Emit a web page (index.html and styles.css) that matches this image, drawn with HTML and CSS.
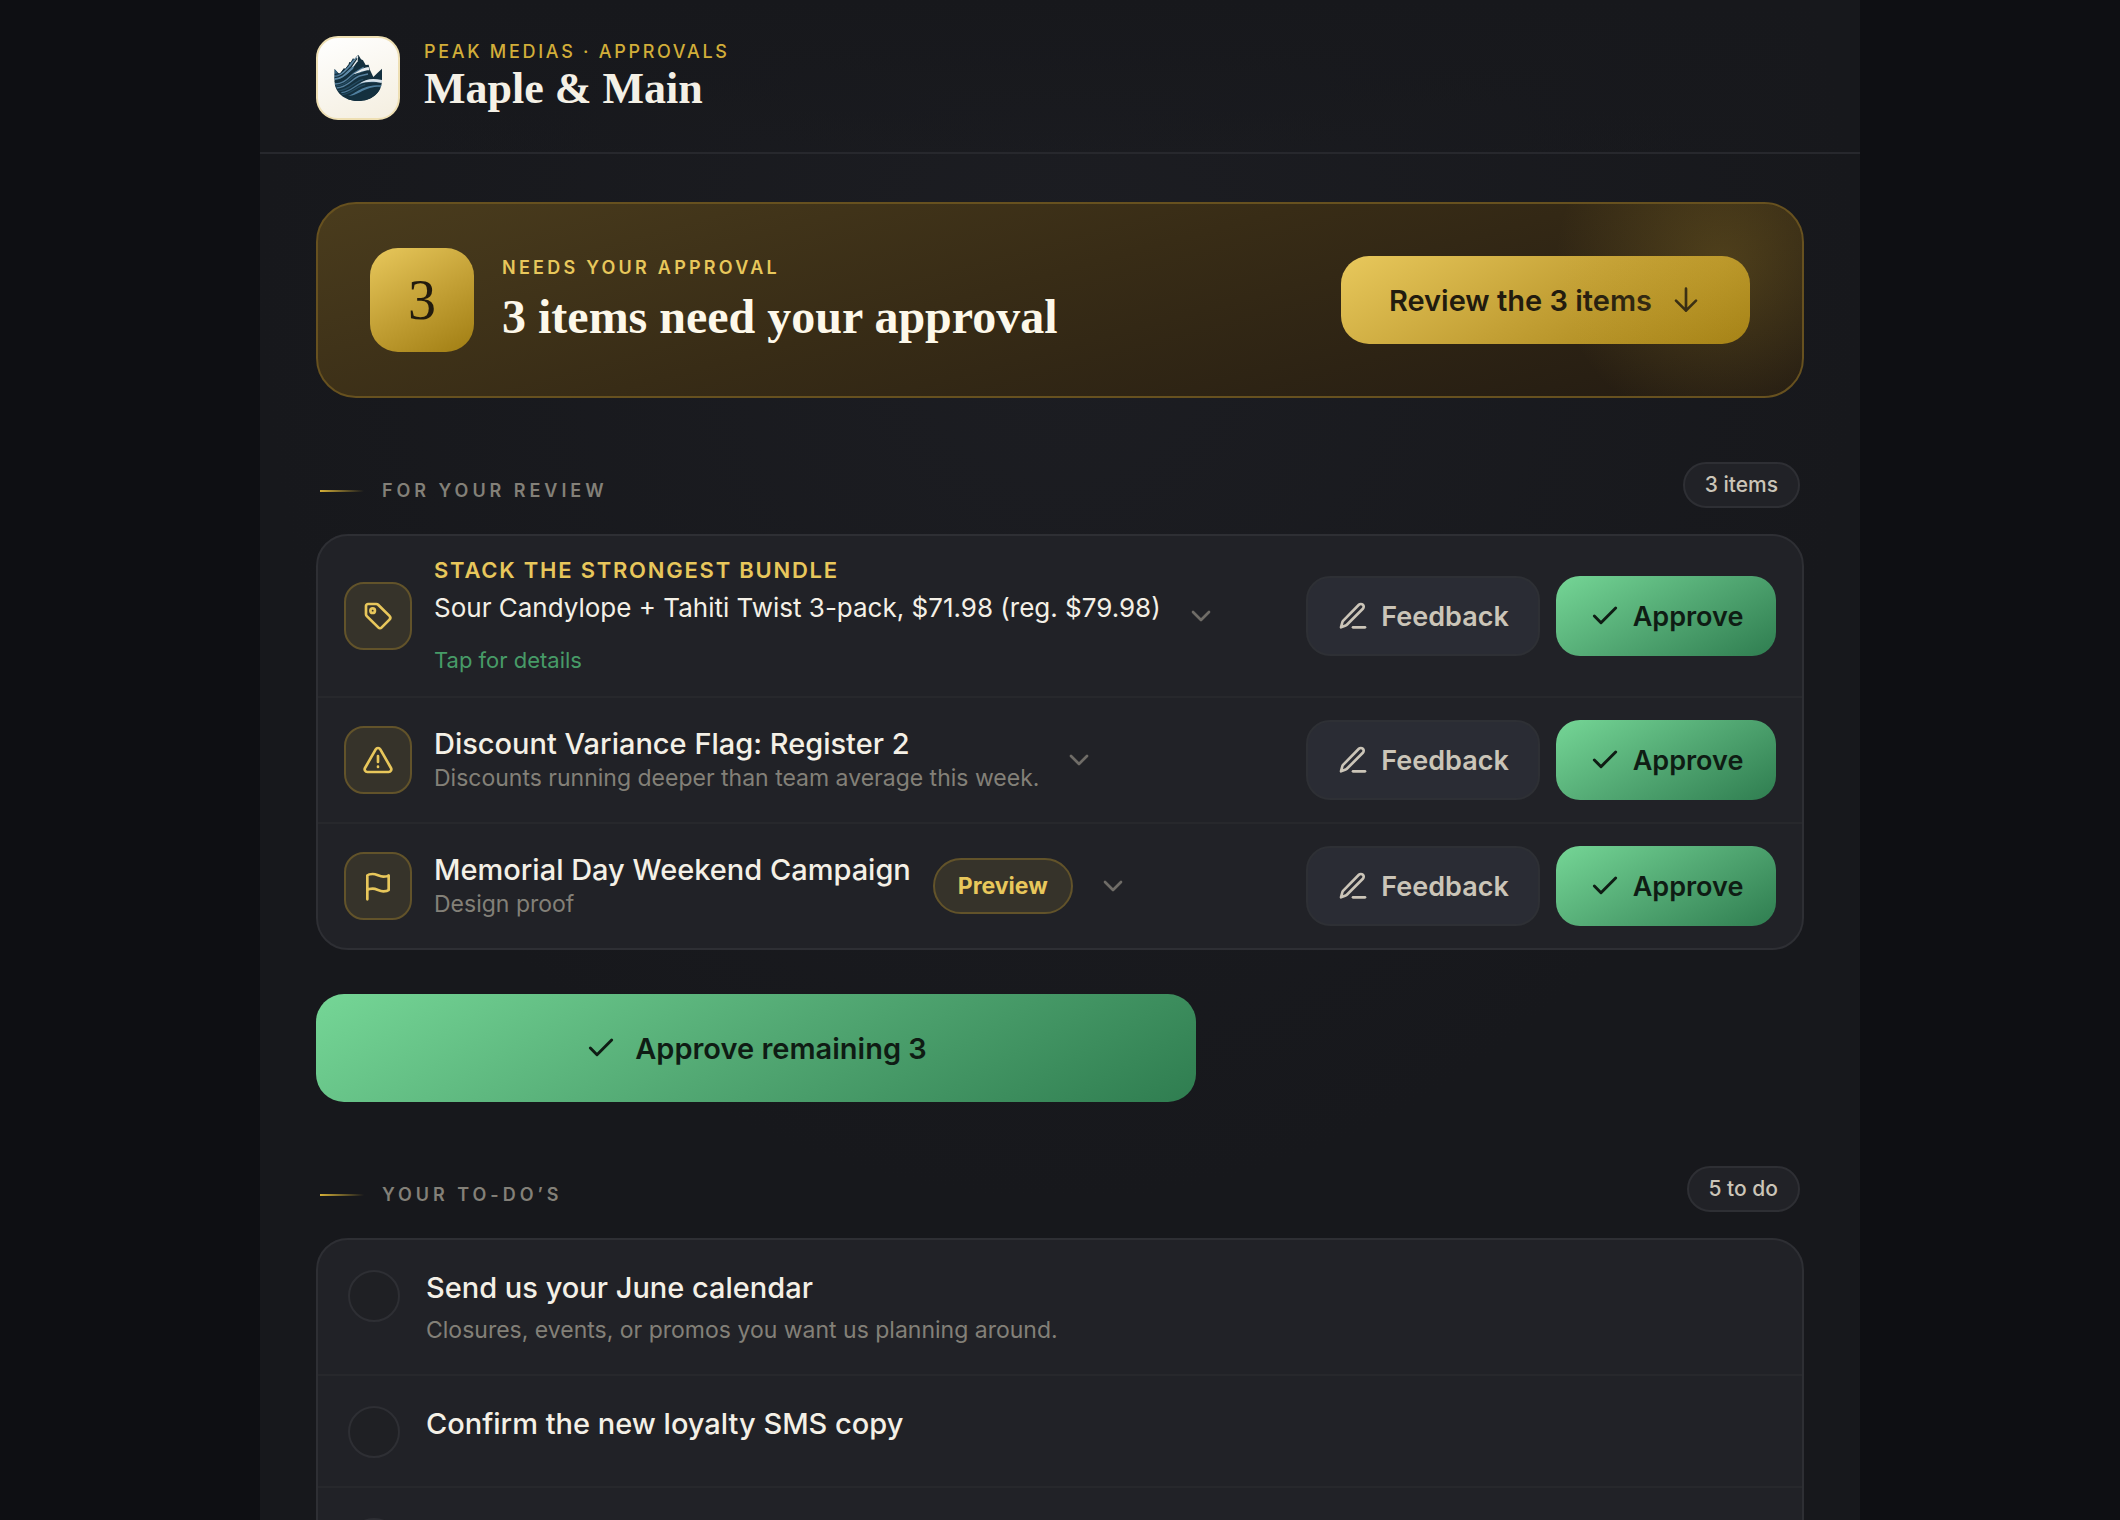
FILE: index.html
```html
<!DOCTYPE html>
<html lang="en">
<head>
<meta charset="utf-8">
<meta name="viewport" content="width=device-width, initial-scale=1">
<title>Maple &amp; Main · Approvals</title>
<link rel="stylesheet" href="styles.css">
</head>
<body>
<svg class="sprite" aria-hidden="true">
  <symbol id="i-check" viewBox="0 0 24 24"><path d="M20 6 9 17l-5-5"/></symbol>
  <symbol id="i-pen" viewBox="0 0 24 24"><path d="M12 20.500h9"/><path d="M16.400 3.600a2.100 2.100 0 0 1 3 3L7.400 18.600a2 2 0 0 1-.85.500L3 20.500l1.060-4a2 2 0 0 1 .5-.86z"/></symbol>
  <symbol id="i-chevron" viewBox="0 0 24 24"><path d="m6 9 6 6 6-6"/></symbol>
  <symbol id="i-down" viewBox="0 0 24 24"><path d="M12 3.500v16.500M4.500 12.500 12 20l7.500-7.500"/></symbol>
  <symbol id="i-tag" viewBox="0 0 24 24"><path d="M3 4.500A1.500 1.500 0 0 1 4.500 3h6.200a2 2 0 0 1 1.400.6l8.500 8.300a2 2 0 0 1 0 2.800l-6 6a1.500 1.500 0 0 1-2.200 0L3.600 12.100A2 2 0 0 1 3 10.700z"/><circle cx="8" cy="8" r="1.700"/></symbol>
  <symbol id="i-alert" viewBox="0 0 24 24"><path d="m21.730 18-8-14a2 2 0 0 0-3.460 0l-8 14A2 2 0 0 0 4 21h16a2 2 0 0 0 1.730-3M12 9v4.500M12 17v.2"/></symbol>
  <symbol id="i-flag" viewBox="0 0 24 24"><path d="M4 22V4s1-1 4-1 5 2 8 2 4-1 4-1v11s-1 1-4 1-5-2-8-2-4 1-4 1"/></symbol>
</svg>

<div class="page">
  <header class="topbar">
    <span class="logo">
      <svg viewBox="0 0 228 228" role="img" aria-label="Peak Medias">
        <defs>
          <clipPath id="peak"><path d="M43 86 57 101l5-3 10-14 3 4 10-14 3-8 4 1 7-12 4 3L115 44l8 14 6 3 8 14 9-1 3 14 11 23 13-13 13-12v34c0 38-31 63-72 63s-71-26-71-63z"/></clipPath>
        </defs>
        <g clip-path="url(#peak)">
          <path fill="#14303f" d="M40 40h150v150H40z"/>
          <path fill="#34607f" d="M43 84v34c22 0 30-18 44-34l28-42-12 12-18 26-28 22z"/>
          <path fill="#5f8aa8" d="m43 110 16-6 26-26 30-34-16 44c-16 14-30 30-56 32z"/>
          <path fill="#f1f3f2" d="m115 44-14 22-11 18 12-6 11-14z"/>
          <g fill="none" stroke-width="4">
            <path stroke="#14303f" d="M43 104c20-2 28-14 42-28M43 113c24-2 34-18 50-32l18-26M43 124c30 0 42-26 62-38l14-18"/>
            <path stroke="#557f9d" d="M45 132c34 0 44-28 66-38l20-12M50 144c34-2 46-28 68-36l26-6"/>
            <path stroke="#23495f" d="M47 138c34 0 44-28 68-38l24-10M54 152c36 0 50-30 76-34M66 164c32-4 44-26 70-30"/>
            <path stroke="#4b7694" d="M64 158c34-4 46-30 76-34l46 1"/>
          </g>
          <path fill="#e8edf0" d="M100 103c16-10 22-18 46-22l2 10c-18 0-30 8-48 12z"/>
          <path fill="#d7e2ea" d="M118 131c18-14 38-18 68-11v9c-30-6-44-4-68 2z"/>
          <path fill="#4f7f9f" d="M84 168c26-8 40-34 102-32v4c-54-2-66 25-102 28z"/>
          <path fill="#14303f" d="M92 172c36-4 46-30 94-28v44H76z"/>
        </g>
      </svg>
    </span>
    <div>
      <p class="brand">PEAK MEDIAS · APPROVALS</p>
      <h1 class="client">Maple &amp; Main</h1>
    </div>
  </header>

  <main class="content">
    <section class="banner">
      <span class="count">3</span>
      <div class="banner-text">
        <p class="banner-label">NEEDS YOUR APPROVAL</p>
        <h2 class="banner-title">3 items need your approval</h2>
      </div>
      <button class="review" type="button">Review the 3 items <svg class="icon"><use href="#i-down"/></svg></button>
    </section>

    <section class="section">
      <div class="section-head">
        <h2 class="section-title">FOR YOUR REVIEW</h2>
        <span class="tally">3 items</span>
      </div>
      <ul class="card">
        <li class="item">
          <span class="badge"><svg class="icon"><use href="#i-tag"/></svg></span>
          <div>
            <p class="offer-label">STACK THE STRONGEST BUNDLE</p>
            <p class="offer">Sour Candylope + Tahiti Twist 3-pack, $71.98 (reg. $79.98)</p>
            <a class="details" href="#details">Tap for details</a>
          </div>
          <button class="expand" type="button" aria-label="Expand"><svg class="icon"><use href="#i-chevron"/></svg></button>
          <div class="actions">
            <button class="btn feedback" type="button"><svg class="icon"><use href="#i-pen"/></svg>Feedback</button>
            <button class="btn approve" type="button"><svg class="icon"><use href="#i-check"/></svg>Approve</button>
          </div>
        </li>
        <li class="item">
          <span class="badge"><svg class="icon"><use href="#i-alert"/></svg></span>
          <div>
            <h3 class="item-title">Discount Variance Flag: Register 2</h3>
            <p class="note">Discounts running deeper than team average this week.</p>
          </div>
          <button class="expand" type="button" aria-label="Expand"><svg class="icon"><use href="#i-chevron"/></svg></button>
          <div class="actions">
            <button class="btn feedback" type="button"><svg class="icon"><use href="#i-pen"/></svg>Feedback</button>
            <button class="btn approve" type="button"><svg class="icon"><use href="#i-check"/></svg>Approve</button>
          </div>
        </li>
        <li class="item">
          <span class="badge"><svg class="icon"><use href="#i-flag"/></svg></span>
          <div>
            <h3 class="item-title">Memorial Day Weekend Campaign</h3>
            <p class="note">Design proof</p>
          </div>
          <button class="preview" type="button">Preview</button>
          <button class="expand" type="button" aria-label="Expand"><svg class="icon"><use href="#i-chevron"/></svg></button>
          <div class="actions">
            <button class="btn feedback" type="button"><svg class="icon"><use href="#i-pen"/></svg>Feedback</button>
            <button class="btn approve" type="button"><svg class="icon"><use href="#i-check"/></svg>Approve</button>
          </div>
        </li>
      </ul>
      <button class="approve approve-all" type="button"><svg class="icon"><use href="#i-check"/></svg>Approve remaining 3</button>
    </section>

    <section class="section">
      <div class="section-head">
        <h2 class="section-title">YOUR TO-DO’S</h2>
        <span class="tally">5 to do</span>
      </div>
      <ul class="card">
        <li class="todo">
          <input class="tick" type="checkbox" id="todo-1">
          <label for="todo-1">
            <span class="todo-title">Send us your June calendar</span>
            <span class="note todo-note">Closures, events, or promos you want us planning around.</span>
          </label>
        </li>
        <li class="todo">
          <input class="tick" type="checkbox" id="todo-2">
          <label for="todo-2"><span class="todo-title">Confirm the new loyalty SMS copy</span></label>
        </li>
        <li class="todo">
          <input class="tick" type="checkbox" aria-label="To-do 3">
        </li>
      </ul>
    </section>
  </main>
</div>
</body>
</html>
```
FILE: styles.css
```css
:root {
  --cream: #f4f0e6;
  --sand: #cbc5b8;
  --muted: #838078;
  --gold: #e8c75b;
  --gold-fill: linear-gradient(150deg, #e8c85c 0%, #c4a136 50%, #a07d12 100%);
  --green-fill: linear-gradient(150deg, #75d696 0%, #52a873 50%, #2f7d50 100%);
  --card: #212227;
  --line: #2e2f34;
}

* { box-sizing: border-box; }

html { height: 100%; }

body {
  margin: 0;
  height: 100%;
  overflow: hidden auto;
  scrollbar-width: none;
  background: #0e0f13;
  color: var(--cream);
  font-family: Inter, sans-serif;
}

h1, h2, h3, p, ul { margin: 0; padding: 0; }
ul { list-style: none; }
button { border: 0; font-family: inherit; white-space: nowrap; cursor: pointer; }

.sprite { position: absolute; width: 0; height: 0; }

.icon {
  flex: none;
  width: 32px;
  height: 32px;
  fill: none;
  stroke: currentColor;
  stroke-width: 2;
  stroke-linecap: round;
  stroke-linejoin: round;
}

.page {
  max-width: 1600px;
  min-height: 100%;
  margin: 0 auto;
  background: radial-gradient(ellipse 800px 900px at 50% 300px, #1c1d22, #17181c);
}

.topbar {
  display: flex;
  align-items: center;
  gap: 24px;
  padding: 36px 56px 32px;
  border-bottom: 2px solid #27282d;
  background: linear-gradient(#17181c, rgba(23, 24, 28, 0.3));
}

.logo {
  display: grid;
  place-items: center;
  flex: none;
  width: 84px;
  height: 84px;
  border: 2px solid #eedfb3;
  border-radius: 22px;
  background: linear-gradient(160deg, #fff, #f4eedf);
}
.logo svg { width: 76px; height: 76px; }

.brand {
  color: #d2ae39;
  font-size: 18px;
  font-weight: 500;
  line-height: 22px;
  letter-spacing: 0.15em;
}

.client, .banner-title {
  font-family: "Liberation Serif", serif;
  font-weight: 700;
}
.client { font-size: 44px; line-height: 52px; }

.content { padding: 48px 56px; }

.banner {
  position: relative;
  display: flex;
  align-items: center;
  gap: 28px;
  padding: 44px 52px;
  overflow: hidden;
  border: 2px solid #67511f;
  border-radius: 40px;
  background: linear-gradient(165deg, #4a3c1d 0%, #382c16 45%, #231b12 100%);
}
.banner::after {
  content: "";
  position: absolute;
  top: -160px;
  right: -140px;
  width: 440px;
  height: 440px;
  background: radial-gradient(circle closest-side, rgba(212, 175, 55, 0.2), transparent 76%);
  pointer-events: none;
}

.count {
  display: grid;
  place-items: center;
  flex: none;
  width: 104px;
  height: 104px;
  border-radius: 28px;
  background: var(--gold-fill);
  color: #221b0e;
  font-family: "Liberation Serif", serif;
  font-size: 56px;
}

.banner-text { flex: 1; }
.banner-label {
  margin-bottom: 10px;
  color: var(--gold);
  font-size: 18px;
  font-weight: 600;
  line-height: 24px;
  letter-spacing: 0.18em;
}
.banner-title { color: #fdf8ea; font-size: 48px; line-height: 54px; }

.review {
  display: flex;
  align-items: center;
  gap: 18px;
  height: 88px;
  padding: 0 48px;
  border-radius: 28px;
  background: var(--gold-fill);
  color: #221b0e;
  font-size: 29px;
  font-weight: 600;
}

.section { margin-top: 64px; }

.section-head {
  display: flex;
  align-items: flex-end;
  justify-content: space-between;
  padding: 0 4px;
  margin-bottom: 26px;
}

.section-title {
  display: flex;
  align-items: center;
  gap: 18px;
  color: var(--muted);
  font-size: 18px;
  font-weight: 600;
  line-height: 34px;
  letter-spacing: 0.22em;
}
.section-title::before {
  content: "";
  width: 44px;
  height: 2px;
  background: linear-gradient(90deg, #d4af37, transparent);
}

.tally {
  padding: 0 20px;
  border: 2px solid var(--line);
  border-radius: 23px;
  background: var(--card);
  color: var(--sand);
  font-size: 21px;
  font-weight: 500;
  line-height: 42px;
}

.card {
  border: 2px solid var(--line);
  border-radius: 32px;
  background: var(--card);
}
.card > li + li { border-top: 2px solid #27282c; }

.item {
  display: flex;
  align-items: center;
  gap: 22px;
  padding: 22px 26px;
}

.badge {
  display: grid;
  place-items: center;
  flex: none;
  width: 68px;
  height: 68px;
  border: 2px solid #62532a;
  border-radius: 20px;
  background: #36332a;
  color: var(--gold);
}

.offer-label {
  color: var(--gold);
  font-size: 22px;
  font-weight: 600;
  line-height: 24px;
  letter-spacing: 0.08em;
}
.offer { margin: 8px 0 20px; font-size: 26px; line-height: 36px; }
.details {
  display: block;
  color: #479b67;
  font-size: 22px;
  line-height: 28px;
  text-decoration: none;
}

.item-title { font-size: 29px; font-weight: 500; line-height: 36px; }
.note { color: var(--muted); font-size: 23px; line-height: 32px; }

.preview {
  height: 56px;
  padding: 0 23px;
  border: 2px solid #62532a;
  border-radius: 28px;
  background: #36332a;
  color: var(--gold);
  font-size: 23px;
  font-weight: 700;
}

.expand {
  display: flex;
  margin-left: 2px;
  padding: 0;
  background: none;
  color: #6f6c67;
}

.actions { display: flex; gap: 16px; margin-left: auto; }
.btn {
  display: flex;
  align-items: center;
  justify-content: center;
  gap: 12px;
  height: 80px;
  border-radius: 24px;
  font-size: 27px;
  font-weight: 600;
}
.feedback {
  min-width: 234px;
  border: 2px solid #2e3035;
  background: #2a2c34;
  color: var(--sand);
}
.approve { background: var(--green-fill); color: #0f1c14; }
.approve .icon { stroke-width: 2.2; }
.btn.approve { min-width: 220px; }

.approve-all {
  display: flex;
  align-items: center;
  justify-content: center;
  gap: 18px;
  width: 100%;
  max-width: 880px;
  height: 108px;
  margin-top: 44px;
  border-radius: 28px;
  font-size: 29px;
  font-weight: 600;
}

.todo {
  display: flex;
  align-items: flex-start;
  gap: 26px;
  padding: 28px 30px;
}
.tick {
  appearance: none;
  flex: none;
  width: 52px;
  height: 52px;
  margin: 2px 0 0;
  border: 2px solid var(--line);
  border-radius: 50%;
  background: #1f2024;
}
.todo-title, .todo-note { display: block; }
.todo-title { font-size: 29px; font-weight: 500; line-height: 40px; }
.todo-note { margin-top: 6px; }
```
